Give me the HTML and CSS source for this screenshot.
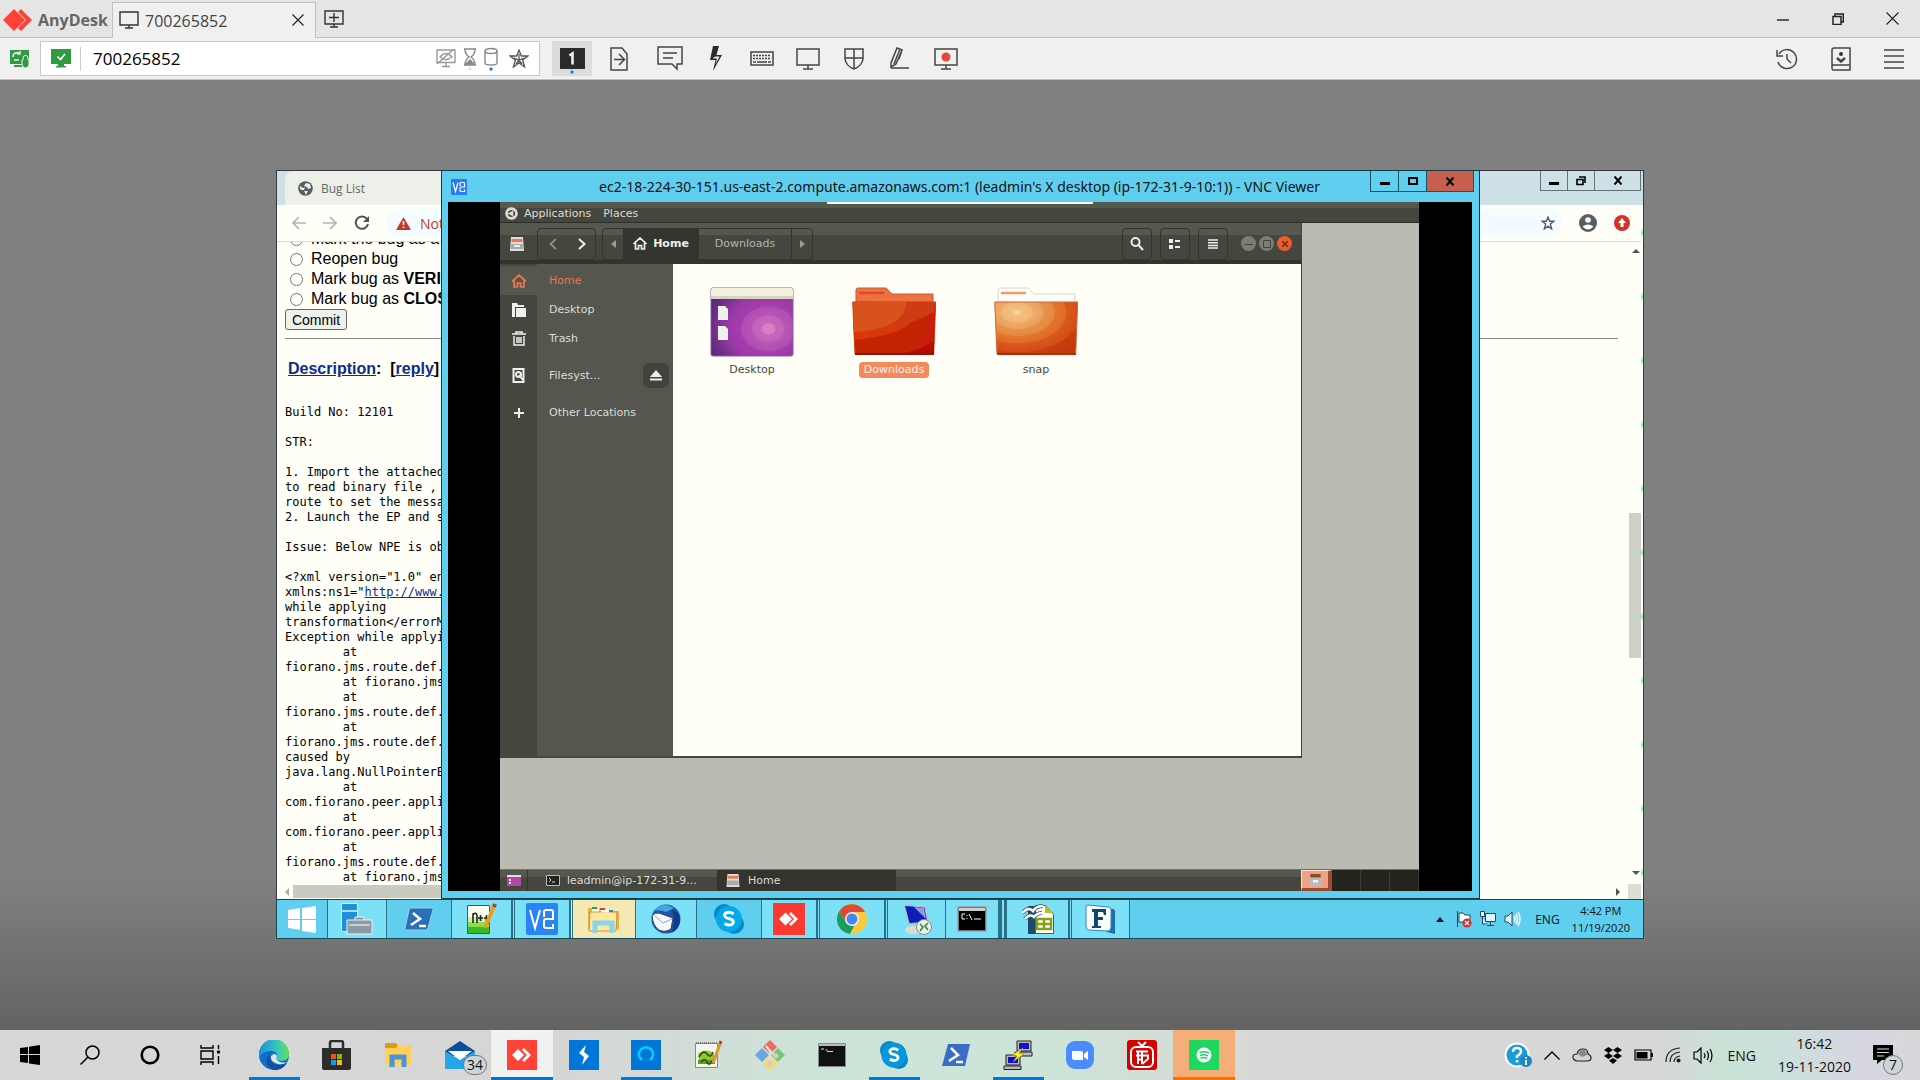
FILE: index.html
```
<!DOCTYPE html>
<html lang="en">
<head>
<meta charset="utf-8">
<title>AnyDesk - 700265852</title>
<link rel="stylesheet" href="styles.css">
</head>
<body>
<header class="titlebar">
  <div class="brand">
    <svg width="30" height="22" viewBox="0 0 30 22"><path fill="#ff4235" d="M0 11 11 0 22 11 11 22zM15 3l3-3 11 11-11 11-3-3 8-8z"/></svg>
    <span>AnyDesk</span>
  </div>
  <div class="session-tab">
    <svg width="20" height="18" viewBox="0 0 20 18" fill="none" stroke="#333" stroke-width="1.4"><path d="M1 1h18v13H1zM10 14v3M6 17h8"/></svg>
    <span>700265852</span>
    <button class="plain" aria-label="Close tab"><svg width="12" height="12" viewBox="0 0 12 12" stroke="#222" stroke-width="1.1"><path d="M.5.5l11 11M11.5.5l-11 11"/></svg></button>
  </div>
  <button class="plain new-tab" aria-label="New tab"><svg width="20" height="18" viewBox="0 0 20 18" fill="none" stroke="#333" stroke-width="1.4"><path d="M1 1h18v13H1zM10 14v3M6 17h8M10 3v9M5 7.500h10"/></svg></button>
  <div class="window-controls">
    <button class="plain" aria-label="Minimize"><svg width="12" height="12" viewBox="0 0 12 12" stroke="#222" stroke-width="1.4"><path d="M0 7h12"/></svg></button>
    <button class="plain" aria-label="Restore"><svg width="12" height="12" viewBox="0 0 12 12" fill="none" stroke="#222" stroke-width="1.5"><path d="M1 3.500h8v8H1zM3 3V1h8.300v8H9.500"/></svg></button>
    <button class="plain" aria-label="Close"><svg width="13" height="13" viewBox="0 0 13 13" stroke="#222" stroke-width="1.1"><path d="M.5.5l12 12M12.500.5l-12 12"/></svg></button>
  </div>
</header>

<nav class="toolbar">
  <svg class="link-state" width="20" height="20" viewBox="0 0 20 20"><path fill="#2f9a3f" d="M0 1h19v14H0zM4 16h8v2H4z"/><path d="M3 8a4 4 0 0 1 7-3M10 2v3H7M9 11H4" fill="none" stroke="#eee" stroke-width="1.500"/><path fill="#2f9a3f" stroke="#eee" d="M13 11V9a2.500 2.500 0 0 1 5 0v2h1v5q-1 3-3.500 3T12 16v-5z"/></svg>
  <div class="address">
    <svg width="20" height="19" viewBox="0 0 20 19"><path fill="#2f9a3f" d="M0 0h20v15H0zM7 15h6v2h2v1.500H5V17h2z"/><path fill="none" stroke="#fff" stroke-width="1.600" d="M6.500 7.500l3 3L14 5"/></svg>
    <i class="divider"></i>
    <input type="text" value="700265852" aria-label="Remote address">
    <svg width="20" height="19" viewBox="0 0 20 19" fill="none" stroke="#999" stroke-width="1.400"><path d="M1 1h18v12.500H1zM10 14v3M6 17.500h8M1 15L18 0M4 8q6-7 12 0-6 5-12 0z"/></svg>
    <svg width="14" height="24" viewBox="0 0 14 24" fill="none" stroke="#888" stroke-width="1.400"><path d="M1 2h12M1 18h12M2 2q0 5 4 8-4 3-4 8M12 2q0 5-4 8 4 3 4 8"/><path fill="#888" d="M3 17l4-4 4 4z"/><circle cx="7" cy="22" r="1.500" fill="#d0dff2" stroke="none"/></svg>
    <svg width="14" height="24" viewBox="0 0 14 24" fill="none" stroke="#888" stroke-width="1.400"><ellipse cx="7" cy="4" rx="6" ry="2.500"/><path d="M1 4v12q0 2 6 2t6-2V4"/><circle cx="7" cy="22" r="1.700" fill="#2d7be0" stroke="none"/></svg>
    <svg class="star" width="20" height="20" viewBox="0 0 20 20" fill="none" stroke="#555" stroke-width="1.300"><path d="M10 1l2.300 6h6.500l-5.200 4 2 7L10 14l-5.600 4 2-7-5.200-4h6.500zM10 5v9M5 9l5 2 5-2M7 15l3-4 3 4"/></svg>
  </div>
  <button class="plain tool active" aria-label="Monitor 1"><svg width="25" height="27" viewBox="0 0 25 27"><path fill="#2b2b2b" d="M0 0h25v21H0z"/><path fill="none" stroke="#eee" stroke-width="2.600" d="M9.500 7.500l3-2v11"/><circle cx="12" cy="24" r="1.700" fill="#2d7be0"/></svg></button>
  <button class="plain tool" aria-label="Transfer file"><svg width="18" height="24" viewBox="0 0 18 24" class="line"><path d="M1 1h11l5 6v16H1zM4 12.500h10M9 7l5.500 5.500L9 18"/></svg></button>
  <button class="plain tool chat" aria-label="Chat"><svg width="26" height="25" viewBox="0 0 26 25" class="line"><path d="M1 1h24v17h-5v5l-5-5H1zM6 7h14M6 12h10"/></svg></button>
  <button class="plain tool" aria-label="Actions"><svg width="14" height="25" viewBox="0 0 14 25"><path fill="#2b2b2b" d="M4 0h6L7.500 9H13L4 25l2.500-11H1z"/><path fill="#f0f0f0" d="M6.500 10.500h4l-4 8 1.500-6H3.500z"/></svg></button>
  <button class="plain tool" aria-label="Keyboard"><svg width="24" height="15" viewBox="0 0 24 15" class="line"><path d="M1 1h22v13H1z"/><path d="M3 4.500h18M3 7.500h18" stroke-dasharray="2 1"/><path d="M3 11h3m1 0h10m1 0h3"/></svg></button>
  <button class="plain tool" aria-label="Display"><svg width="24" height="22" viewBox="0 0 24 22" class="line"><path d="M1 1h22v16H1zM12 17v4M7 21h10"/></svg></button>
  <button class="plain tool" aria-label="Permissions"><svg width="20" height="22" viewBox="0 0 20 22" class="line"><path d="M1 1h18v10q-1 7-9 10Q2 18 1 11zM10 1v20M1 10h18"/></svg></button>
  <button class="plain tool" aria-label="Whiteboard"><svg width="20" height="23" viewBox="0 0 20 23" class="line"><path d="M1 21h18M1 20V16L7 1l5 2-6 14zM10 2L4 17M12 3l-3 9"/></svg></button>
  <button class="plain tool" aria-label="Record"><svg width="24" height="22" viewBox="0 0 24 22" class="line"><path d="M1 1h22v16H1zM12 17v4M7 21h10"/><circle cx="12" cy="9" r="4.500" fill="#e8453c" stroke="none"/></svg></button>
  <div class="tool-right">
    <button class="plain" aria-label="History"><svg width="22" height="22" viewBox="0 0 22 22" class="line"><path d="M3 6a9.500 9.500 0 1 1-1 8M1 2v6h6M11 6v5l4 4"/></svg></button>
    <button class="plain" aria-label="Address book"><svg width="20" height="24" viewBox="0 0 20 24" class="line"><path d="M3 1h16v22H2q-1 0-1-2V3q0-2 2-2zM1 18h18"/><path d="M6 11l4 3.500L14 11" stroke-width="2.500"/><circle cx="10" cy="7" r="2" fill="#333" stroke="none"/></svg></button>
    <button class="plain" aria-label="Menu"><svg width="20" height="22" viewBox="0 0 20 22" class="line"><path d="M0 2h20M0 8h20M0 14h20M0 20h20"/></svg></button>
  </div>
</nav>

<main class="viewer">
<div class="remote">
  <div class="desktop">
    <section class="chrome">
      <div class="tabstrip">
        <div class="chrome-tab">
          <svg width="15" height="15" viewBox="0 0 15 15"><circle cx="7.500" cy="7.500" r="7.300" fill="#555f63"/><path fill="#edf0e8" d="M2 5l3 2 2-1-1 3-2 0-2-1zM8 2l4 1 1 4-3 1-1-2-3-1zM6 10l4 0-2 4z"/></svg>
          <span>Bug List</span>
        </div>
        <div class="chrome-controls">
          <button class="plain" aria-label="Minimize window"><svg width="10" height="10"><path d="M0 6h10v3H0z"/></svg></button>
          <button class="plain" aria-label="Restore window"><svg width="10" height="10" fill="none" stroke="#000" stroke-width="1.600"><path d="M1 3.500h6v5H1zM3 1h6v6"/></svg></button>
          <button class="plain" aria-label="Close window"><svg width="8" height="9" stroke="#000" stroke-width="2"><path d="M.5.500l7 8M7.500.500l-7 8"/></svg></button>
        </div>
      </div>
      <div class="navbar">
        <svg width="14" height="14" fill="none" stroke="#a9b6b7" stroke-width="1.700"><path d="M14 7H1M7 1L1 7l6 6"/></svg>
        <svg width="14" height="14" fill="none" stroke="#a9b6b7" stroke-width="1.700"><path d="M0 7h13M7 1l6 6-6 6"/></svg>
        <svg width="16" height="16" viewBox="0 0 16 16" fill="none" stroke="#4d5558" stroke-width="2"><path d="M13 4a6.200 6.200 0 1 0 1 5"/><path fill="#4d5558" stroke="none" d="M15 1v6H9z"/></svg>
        <div class="omnibox">
          <svg width="15" height="13" viewBox="0 0 15 13"><path fill="#c9352c" d="M7.500 0L15 13H0z"/><path stroke="#fff" stroke-width="1.600" d="M7.500 4v4M7.500 9.500v1.500"/></svg>
          <span>Not secure</span>
          <svg class="end" width="14" height="14" viewBox="0 0 20 20" fill="none" stroke="#555f63" stroke-width="2"><path d="M10 1.500l2.300 6h6l-5 4 2 7L10 14.500l-5.300 4 2-7-5-4h6z"/></svg>
        </div>
        <svg width="18" height="18" viewBox="0 0 18 18"><circle cx="9" cy="9" r="9" fill="#555f63"/><circle cx="9" cy="6" r="2.800" fill="#fff"/><path fill="#fff" d="M3.500 12.500q5.500-4 11 0-5.500 6-11 0z"/></svg>
        <svg width="16" height="16" viewBox="0 0 16 16"><circle cx="8" cy="8" r="8" fill="#d93025"/><path fill="#fff" d="M8 3l4 5H9.500v4h-3V8H4z"/></svg>
      </div>
      <div class="page">
        <form class="bug-form">
          <label><input type="radio" name="knob">Mark the bug as a duplicate</label>
          <label><input type="radio" name="knob">Reopen bug</label>
          <label><input type="radio" name="knob"><span>Mark bug as <b>VERIFIED</b></span></label>
          <label><input type="radio" name="knob"><span>Mark bug as <b>CLOSED</b></span></label>
          <button type="button">Commit</button>
        </form>
        <hr>
        <p class="heading"><a href="#c0">Description</a>: &nbsp;[<a href="#reply">reply</a>]</p>
        <pre>Build No: 12101

STR:

1. Import the attached
to read binary file ,
route to set the message
2. Launch the EP and s

Issue: Below NPE is ob

&lt;?xml version="1.0" en
xmlns:ns1="<a href="#ns">http://www.</a>
while applying
transformation&lt;/errorM
Exception while applyi
        at
fiorano.jms.route.def.
        at fiorano.jms
        at
fiorano.jms.route.def.
        at
fiorano.jms.route.def.
caused by
java.lang.NullPointerE
        at
com.fiorano.peer.appli
        at
com.fiorano.peer.appli
        at
fiorano.jms.route.def.
        at fiorano.jms</pre>
        <div class="vscroll"><i class="up"></i><i class="thumb"></i><i class="down"></i></div>
      </div>
      <div class="hscroll"><i class="left"></i><i class="thumb"></i><i class="right"></i><i class="corner"></i></div>
      <i class="edge"></i>
    </section>

    <section class="vnc">
      <div class="vnc-title">
        <svg width="16" height="16" viewBox="0 0 16 16"><rect width="16" height="16" rx="1" fill="#2a7df0"/><path fill="none" stroke="#fff" stroke-width="1.200" d="M2 3.500l2.500 9L7 3.500M9 7V4.500q0-1 1-1h2.500q1 0 1 1V8H10q-1 0-1 1v2.500q0 1 1 1h3.500v-2"/></svg>
        <h1>ec2-18-224-30-151.us-east-2.compute.amazonaws.com:1 (leadmin's X desktop (ip-172-31-9-10:1)) - VNC Viewer</h1>
        <div class="vnc-controls">
          <button class="plain" aria-label="Minimize VNC"><svg width="10" height="10"><path d="M0 6h10v3H0z"/></svg></button>
          <button class="plain" aria-label="Maximize VNC"><svg width="10" height="9" fill="none" stroke="#000" stroke-width="2"><path d="M1 1h8v6H1z"/></svg></button>
          <button class="plain close" aria-label="Close VNC"><svg width="8" height="9" stroke="#000" stroke-width="2"><path d="M.5.500l7 8M7.500.500l-7 8"/></svg></button>
        </div>
      </div>
      <div class="vnc-screen">
        <div class="gnome">
          <div class="panel top">
            <svg width="13" height="13" viewBox="0 0 13 13"><circle cx="6.500" cy="6.500" r="6.300" fill="#dcdcd4"/><circle cx="6.500" cy="6.500" r="2.800" fill="none" stroke="#45463e" stroke-width="1.600"/><path stroke="#dcdcd4" stroke-width="1.200" d="M6.500 6.500H1M6.500 6.500l3-5M6.500 6.500l3 5"/></svg>
            <span>Applications</span><span>Places</span>
            <i class="vnc-handle"></i>
          </div>
          <div class="workspace">
            <section class="files">
              <div class="files-head">
                <svg class="cabinet" width="14" height="14" viewBox="0 0 14 14"><path fill="#ddd" d="M1 0h12l1 14H0z"/><path fill="#ef7748" d="M1.500 2h11v3h-11z"/><path fill="#aaa" d="M1 7h12v5H1z"/><path fill="#eee" d="M4 8h6v2H4z"/></svg>
                <div class="group nav-pair">
                  <button class="plain" aria-label="Back"><svg width="8" height="12" fill="none" stroke="#8f9088" stroke-width="1.800"><path d="M7 1L1.500 6 7 11"/></svg></button>
                  <button class="plain" aria-label="Forward"><svg width="8" height="12" fill="none" stroke="#eee" stroke-width="2"><path d="M1 1l5.500 5L1 11"/></svg></button>
                </div>
                <div class="group path">
                  <button class="plain arrow" aria-label="Scroll path left"><svg width="5" height="8"><path fill="#9a9b93" d="M5 0v8L0 4z"/></svg></button>
                  <button class="plain current"><svg width="14" height="13" viewBox="0 0 14 13" fill="none" stroke="#eee" stroke-width="1.700"><path d="M.500 7L7 1l6.500 6M2.500 6v6h3V8.500h3V12h3V6"/></svg>Home</button>
                  <button class="plain crumb">Downloads</button>
                  <button class="plain arrow" aria-label="Scroll path right"><svg width="5" height="8"><path fill="#9a9b93" d="M0 0v8l5-4z"/></svg></button>
                </div>
                <div class="head-tools">
                  <button class="plain group" aria-label="Search"><svg width="14" height="14" fill="none" stroke="#eee" stroke-width="2"><circle cx="5.500" cy="5" r="4"/><path d="M8.500 8l4.500 5"/></svg></button>
                  <button class="plain group" aria-label="View"><svg width="12" height="10"><path fill="#eee" d="M0 0h4v4H0zM6 1h5v2H6zM0 6h4v4H0zM6 7h5v2H6z"/></svg></button>
                  <button class="plain group" aria-label="Menu"><svg width="10" height="10" stroke="#eee" stroke-width="1.500"><path d="M0 1h10M0 3.700h10M0 6.400h10M0 9h10"/></svg></button>
                </div>
                <div class="bullets">
                  <button class="plain bullet" aria-label="Minimize files"><svg width="8" height="8" stroke="#45463e"><path d="M0 4.500h8"/></svg></button>
                  <button class="plain bullet" aria-label="Maximize files"><svg width="8" height="8" stroke="#45463e" fill="none"><path d="M.500.500h7v7h-7z"/></svg></button>
                  <button class="plain bullet quit" aria-label="Close files"><svg width="6" height="6" stroke="#5a2a15" stroke-width="1.400"><path d="M0 0l6 6M6 0L0 6"/></svg></button>
                </div>
              </div>
              <div class="files-body">
                <ul class="places">
                  <li class="here"><svg width="16" height="14" viewBox="0 0 14 13" fill="none" stroke="#e8764a" stroke-width="1.700"><path d="M.500 7L7 1l6.500 6M2.500 6v6h3V8.500h3V12h3V6"/></svg><span>Home</span></li>
                  <li><svg width="16" height="14"><path fill="#eee" d="M1 0h5l1 2h6v2H4v10H1zM5 5h10v9H5z"/></svg><span>Desktop</span></li>
                  <li><svg width="14" height="15" fill="none" stroke="#eee" stroke-width="1.500"><path d="M0 3h14M4 3V1h6v2M2 5v9h10V5M5 6v6M7 6v6M9 6v6"/></svg><span>Trash</span></li>
                  <li class="spaced"><svg width="14" height="15" fill="none" stroke="#eee" stroke-width="2"><path d="M1.500 1h10v13h-10z"/><circle cx="6.500" cy="6.500" r="2.500"/><path d="M7 7l4 5"/></svg><span>Filesyst...</span>
                    <button class="plain eject" aria-label="Eject"><svg width="12" height="11"><path fill="#eee" d="M6 0l6 7H0zM0 8.500h12v2H0z"/></svg></button></li>
                  <li class="spaced"><svg width="10" height="10" stroke="#eee" stroke-width="2"><path d="M0 5h10M5 0v10"/></svg><span>Other Locations</span></li>
                </ul>
                <div class="grid">
                  <figure>
                    <svg width="84" height="70" viewBox="0 0 84 70"><defs><radialGradient id="pu" cx=".7" cy=".6" r=".75"><stop offset="0" stop-color="#dc84c4"/><stop offset=".1" stop-color="#d680c2"/><stop offset=".12" stop-color="#c766bd"/><stop offset=".25" stop-color="#c263bb"/><stop offset=".28" stop-color="#b655b1"/><stop offset=".42" stop-color="#b04fb4"/><stop offset=".46" stop-color="#a63bae"/><stop offset=".65" stop-color="#9a3aa8"/><stop offset="1" stop-color="#5c2a7c"/></radialGradient></defs><rect x="1" y="1" width="82" height="68" rx="2" fill="url(#pu)" stroke="#8c5a9c"/><path fill="#f3f0e2" d="M1 3q0-2 2-2h78q2 0 2 2v9H1z"/><path fill="#d9d3bf" d="M1 9h82v3H1z"/><path fill="#eef0ea" d="M8 19h7l3 3v11H8zM8 39h7l3 3v11H8z"/></svg>
                    <figcaption>Desktop</figcaption>
                  </figure>
                  <figure class="selected">
                    <svg width="84" height="70" viewBox="0 0 84 70"><path fill="#ee7140" stroke="#c85a34" d="M4 15V3q0-2 2-2h28l6 6h41v9z"/><path stroke="#e04a22" stroke-width="2.500" d="M7 6h25"/><path fill="#c42304" stroke="#c43a14" d="M.700 15h83l-2 52H3z"/><path fill="#d8380c" d="M1 15h68q-4 22-26 30-18 6-41 8z"/><path fill="#d8521c" d="M1 15h54q-2 16-20 24-14 5-33 6z"/><path fill="#ce3c14" d="M55 15h28l-1 10q-22 12-40 14 11-8 13-24z"/><path fill="#cc1c10" d="M83 27l-1 30q-10-2-20 2 12-16 21-32z"/><path fill="#b40c02" d="M82 54v13H46q18-2 36-13z"/><path stroke="#8c1505" stroke-width="2" d="M3 67h79"/></svg>
                    <figcaption>Downloads</figcaption>
                  </figure>
                  <figure>
                    <svg width="84" height="70" viewBox="0 0 84 70"><defs><radialGradient id="or" cx=".27" cy=".2" r=".95"><stop offset="0" stop-color="#fbd79a"/><stop offset=".05" stop-color="#f9cc90"/><stop offset=".06" stop-color="#f3c07e"/><stop offset=".2" stop-color="#f0b674"/><stop offset=".21" stop-color="#eeaa68"/><stop offset=".33" stop-color="#ec9f5e"/><stop offset=".34" stop-color="#e6914c"/><stop offset=".47" stop-color="#e48a3c"/><stop offset=".48" stop-color="#e27630"/><stop offset=".62" stop-color="#e06a26"/><stop offset=".63" stop-color="#d95a1c"/><stop offset=".8" stop-color="#d44c18"/><stop offset=".81" stop-color="#c8400e"/><stop offset="1" stop-color="#c23a0c"/></radialGradient></defs><path fill="#fdfdf8" stroke="#d5dacd" d="M4 15V3q0-2 2-2h28l6 6h41v9z"/><path stroke="#f09a70" stroke-width="2.500" d="M7 6h25"/><path fill="url(#or)" stroke="#d0663a" d="M.700 15h83l-2 52H3z"/><path stroke="#a83408" stroke-width="2" d="M3 67h79"/></svg>
                    <figcaption>snap</figcaption>
                  </figure>
                </div>
              </div>
            </section>
          </div>
          <div class="panel bottom">
            <div class="show"><svg width="14" height="11"><path fill="#b048a8" d="M0 0h14v11H0z"/><path fill="#e8d8e0" d="M0 0h14v2H0zM2 4h2v2H2zM2 7h2v2H2z"/></svg></div>
            <div class="task term"><svg width="14" height="11"><path fill="#22251e" stroke="#bbb" d="M.500.500h13v10H.500z"/><path stroke="#ddd" fill="none" d="M3 3l2 2-2 2M6 7h3"/></svg><span>leadmin@ip-172-31-9...</span></div>
            <div class="task open"><svg width="14" height="13" viewBox="0 0 14 14"><path fill="#ddd" d="M1 0h12l1 14H0z"/><path fill="#ef7748" d="M1.500 2h11v3h-11z"/><path fill="#aaa" d="M1 7h12v5H1z"/></svg><span>Home</span></div>
            <div class="pager"><i class="cell on"><svg width="13" height="12" viewBox="0 0 14 14"><path fill="#bbb" d="M0 4h14v10H0z"/><path fill="#8c4a24" d="M1 0h12v4H1z"/><path fill="#eee" d="M4 7h6v3H4z"/></svg></i><i class="cell"></i><i class="cell"></i><i class="cell"></i></div>
          </div>
        </div>
      </div>
    </section>
  </div>

  <footer class="w8bar">
    <button class="plain w1" aria-label="Start"><svg width="28" height="27" viewBox="0 0 28 27"><path fill="#fff" d="M0 4l12-2v11H0zM14 2l14-2v13H14zM0 14h12v10L0 22zM14 14h14v13l-14-2z"/></svg></button>
    <button class="plain w2 lit" aria-label="Server Manager"><svg width="32" height="32"><path fill="#2090dc" stroke="#d8f2fb" d="M.500.500h16v28H.500z"/><path stroke="#d8f2fb" stroke-width="1.500" d="M1 8h15"/><path fill="#8d9aa4" stroke="#e8f2f4" d="M6 17h25v14H6zM14 17v-3h9v3"/><path stroke="#fff" d="M8 22h21"/></svg></button>
    <button class="plain w3" aria-label="PowerShell"><svg width="30" height="24"><path fill="#2b6fb4" stroke="#9fd0f0" d="M7 1h21q2 0 1 2l-5 18q0 2-2 2H2q-2 0-1-2L5 3q0-2 2-2z"/><path fill="none" stroke="#fff" stroke-width="2.500" d="M9 6l7 6-9 6M15 19h7"/></svg></button>
    <button class="plain w4 lit" aria-label="Notepad++"><svg width="32" height="32"><path fill="#fbfff4" stroke="#555" d="M1.500 2.500h22v28h-22z"/><path fill="#d4f0a0" d="M2 14h21v5H2z"/><path fill="#8cdc50" d="M2 19h21v5H2z"/><path fill="#3cb824" d="M2 24h21v6H2z"/><path fill="none" stroke="#222" stroke-width="1.600" d="M7 20v-9q4-2 4 2v7M12 15h5M14.500 12v6M18 15h5M20.500 12v6"/><path stroke="#e6a022" stroke-width="4" d="M19 25L28 3"/><path stroke="#b04030" stroke-width="4" d="M28 4l1-3"/></svg></button>
    <button class="plain w5 lit stack" aria-label="VNC"><svg width="32" height="32" viewBox="0 0 16 16"><rect width="16" height="16" rx="1" fill="#2a84f5"/><path fill="none" stroke="#fff" d="M2 3.500l2.500 9L7 3.500M9 7V4.500q0-1 1-1h2.500q1 0 1 1V8H10q-1 0-1 1v2.500q0 1 1 1h3.500v-2"/></svg></button>
    <button class="plain w6 hot stack" aria-label="Explorer"><svg width="34" height="30"><path fill="#e3b04b" d="M1 4h11l2 3h18v18H1z"/><path fill="#fbe9a0" stroke="#c9973a" d="M3 8h27l-1 19H2z"/><path stroke="#fff" stroke-width="3" d="M5 6h7M14 7h8"/><path stroke="#27a048" stroke-width="2" d="M5 4h5"/><path stroke="#d8402a" stroke-width="2" d="M13 5h5"/><path stroke="#2e86d8" stroke-width="2" d="M22 7h4"/><path fill="none" stroke="#8cd4ee" stroke-width="5" d="M8 29V19h17v10"/></svg></button>
    <button class="plain w7 lit" aria-label="Thunderbird"><svg width="32" height="32"><circle cx="16" cy="16" r="14.500" fill="#1d58a8"/><path fill="#47a4e4" d="M4 8Q12-2 24 5l-8 4q-7-3-12-1z"/><path fill="#0f3c8a" d="M22 6q9 4 8 12-1 9-9 12 5-8 1-24z"/><path fill="#f4f8fb" stroke="#2d3f70" d="M2 13q3-4 7-3l14 5-2 11q-6 4-12 1-6-4-7-14z"/><path fill="none" stroke="#96a8bc" d="M5 13l8 7 9-4"/></svg></button>
    <button class="plain w8" aria-label="Skype"><svg width="30" height="30" viewBox="0 0 30 30"><circle cx="10" cy="10" r="10" fill="#0587c8"/><circle cx="20" cy="20" r="10" fill="#0587c8"/><circle cx="15" cy="15" r="13" fill="#05a8ea"/><path fill="none" stroke="#fff" stroke-width="3" d="M19.500 10q-3-2.500-6.500-1.500-3.500 1.500-2 4 1 1.500 4.500 2.200 5 1.300 3.500 4.500-2 3.500-8.500.5"/></svg></button>
    <button class="plain w9 lit" aria-label="AnyDesk"><svg width="32" height="32"><path fill="#fa3a31" d="M0 0h32v32H0z"/><path fill="#fff" d="M6 16l6.500-6.500L19 16l-6.500 6.500zM16 11l2-2 7 7-7 7-2-2 5-5z"/></svg></button>
    <button class="plain w10 lit stack" aria-label="Chrome"><svg width="30" height="30" viewBox="0 0 30 30"><circle cx="15" cy="15" r="15" fill="#fbc93c"/><path fill="#dc4a3c" d="M2 7.500A15 15 0 0 1 28 8H15l-6 10z"/><path fill="#16a05c" d="M2 7.500L9.500 19l7.500 3-4 8A15 15 0 0 1 2 7.500z"/><circle cx="15" cy="15" r="7" fill="#f3f3ee"/><circle cx="15" cy="15" r="5.500" fill="#4687f2"/></svg></button>
    <button class="plain w11 lit stack" aria-label="Remote Desktop"><svg width="32" height="32"><ellipse cx="13" cy="27" rx="9" ry="4" fill="#dcdcd4"/><path fill="#0a1fb8" stroke="#b8c0cc" stroke-width="1.500" d="M3 2l21 2 3 15-19 2z"/><path fill="#8d98e8" d="M13 4l10 1 2 11z"/><circle cx="23" cy="24" r="7.500" fill="#eef0ea" stroke="#888"/><path fill="none" stroke="#2b8a3c" stroke-width="1.600" d="M19 21l3 3-3 4M27 20l-3 3 3 4"/></svg></button>
    <button class="plain w12 lit" aria-label="Command Prompt"><svg width="30" height="26"><path fill="#000" stroke="#9aa0a4" stroke-width="1.500" d="M1 1h28v24H1z"/><path fill="#ccd0cc" d="M2 2h26v3H2z"/><path fill="none" stroke="#fff" d="M8 8H5v5h3M10 9v1M10 12v1M12 8l3 6M17 13h7"/></svg></button>
    <button class="plain w13 lit stack3" aria-label="OpenOffice"><svg width="32" height="32"><path fill="#1c4a6e" d="M6 3h7v28H6z"/><path fill="#fffff4" stroke="#555" d="M13.500 2.500h10l8 9v19h-18z"/><path fill="#b8c41c" d="M23 2v8h8z"/><path fill="#fff" stroke="#8aa01c" stroke-width="2.500" d="M15 16h14v10H15zM22 16v10M15 21h14"/><path fill="none" stroke="#34505e" stroke-width="4" d="M0 10q7-7 11-2 3-5 10-5M3 16q5-6 9-2 3-4 8-4"/><path fill="none" stroke="#f4faff" stroke-width="2.500" d="M0 10q7-7 11-2 3-5 10-5M3 16q5-6 9-2 3-4 8-4"/></svg></button>
    <button class="plain w14 lit stack" aria-label="Fiorano"><svg width="31" height="30"><path fill="#1d6fb4" d="M8 4l20 1q2 0 2 3v22l-8-2z"/><path fill="#fafcf8" stroke="#3a88c4" d="M3 1l20 2q3 0 3 3v17q0 4-3 4L4 26q-3 0-3-4V3q0-2 2-2z"/><path fill="#0e4676" d="M7 5h14v6h-2l-1-3h-5v5h5v3h-5v6h3v2H7v-2h2V8H7z"/></svg></button>
    <div class="w8tray">
      <svg width="8" height="5"><path fill="#112" d="M4 0l4 5H0z"/></svg>
      <svg width="16" height="17"><path fill="#fff" stroke="#245" d="M1.500 0v16M3 2h4l2 2h5v7H3z"/><circle cx="11" cy="12" r="4.500" fill="#d02b2b"/><path stroke="#fff" stroke-width="1.300" d="M9 10l4 4M13 10l-4 4"/></svg>
      <svg width="16" height="16" fill="#dff4fc" stroke="#234a5c"><path d="M5.500 2.500h10v8h-10zM7 14.500h7M10.500 11v3M.500.500h4v5h-4zM2.500 6v7h4"/></svg>
      <svg width="18" height="16" fill="none" stroke="#fff" stroke-width="1.500"><path fill="#dff4fc" stroke="#234a5c" stroke-width="1" d="M1 5h3l4-4v14l-4-4H1z"/><path d="M10 5q2 3 0 6M12 3q3 5 0 10M14 1q4 7 0 14"/></svg>
      <span>ENG</span>
      <time>4:42 PM<br>11/19/2020</time>
    </div>
  </footer>
</div>
</main>

<footer class="hostbar">
  <button class="plain t0" aria-label="Start"><svg width="20" height="20"><path d="M0 3l8-1v7H0zM9 1.700L20 0v9H9zM0 10h8v8l-8-1zM9 10h11v10L9 18.500z"/></svg></button>
  <button class="plain t0" aria-label="Search"><svg width="20" height="20" fill="none" stroke="#000" stroke-width="1.500"><circle cx="12.500" cy="7.500" r="6.500"/><path d="M8 12l-7.500 7.500"/></svg></button>
  <button class="plain t0" aria-label="Cortana"><svg width="20" height="20" fill="none" stroke="#000" stroke-width="2.600"><circle cx="10" cy="10" r="8.300"/></svg></button>
  <button class="plain t0" aria-label="Task view"><svg width="21" height="20" fill="none" stroke="#000" stroke-width="1.400"><path d="M1 0v3h12V0M1 6h12v8H1zM1 20v-3h12v3M18.500 0v4M18.500 11v8"/><circle cx="18.500" cy="7" r="1" fill="#000"/></svg></button>
  <button class="plain t run first" aria-label="Edge"><svg width="30" height="30" viewBox="0 0 30 30"><defs><linearGradient id="ed" x1="0" x2="1"><stop offset="0" stop-color="#1b90dc"/><stop offset=".6" stop-color="#36c6c0"/><stop offset="1" stop-color="#69df55"/></linearGradient></defs><circle cx="15" cy="15" r="15" fill="#0f6fc8"/><path fill="url(#ed)" d="M0 14A15 15 0 0 1 30 14q0 7-8 7-6 0-4-4 1-5-5-6Q5 10 0 17z"/><path fill="#144f9c" d="M11 14q-2 5 3 9t14 0Q23 31 14 30 6 26 8 18z"/><path fill="#dbe6ee" d="M12 16q4-4 6 0-2 4 3 6 3 1 7 0-4 3-9 2-8-2-7-8z"/></svg></button>
  <button class="plain t" aria-label="Store"><svg width="29" height="30"><path fill="#2c2c2c" d="M0 8h29v20q0 2-2 2H2q-2 0-2-2z"/><path fill="none" stroke="#2c2c2c" stroke-width="2.500" d="M8 8V3q0-2 2-2h9q2 0 2 2v5"/><path fill="#f25022" d="M9 14h5v5H9z"/><path fill="#7fba00" d="M15 14h5v5h-5z"/><path fill="#00a4ef" d="M9 20h5v5H9z"/><path fill="#ffb900" d="M15 20h5v5h-5z"/></svg></button>
  <button class="plain t" aria-label="File Explorer"><svg width="27" height="24"><path fill="#e09a10" d="M0 1q0-1 1-1h10l2 3-1 3H0z"/><path fill="#ffd05c" d="M0 5h11l2-3h13v20H0z"/><path fill="none" stroke="#4a94d4" stroke-width="5" d="M7 24V14h12v10"/></svg></button>
  <button class="plain t badge-host" aria-label="Mail"><svg width="30" height="28"><path fill="#0a4ea2" d="M0 10L15 0l15 10v5H0z"/><path fill="#28a4ea" d="M0 10l15 9 15-9v18H0z"/><path fill="#fff" d="M3 10h24l-12 9z"/></svg><span class="badge">34</span></button>
  <button class="plain t run focus" aria-label="AnyDesk"><svg width="30" height="30"><path fill="#ff4235" d="M0 0h30v30H0z"/><path fill="#fff" d="M5 15l6-6 6 6-6 6zM15 10l2-2 7 7-7 7-2-2 5-5z"/></svg></button>
  <button class="plain t" aria-label="Share"><svg width="30" height="30"><path fill="#0077d8" d="M0 0h30v30H0z"/><path fill="#fff" d="M17 5l-7 8 5 4-2 8 7-9-5-4z"/></svg></button>
  <button class="plain t run" aria-label="Alexa"><svg width="30" height="30"><path fill="#0077d8" d="M0 0h30v30H0z"/><path fill="none" stroke="#00d0ff" stroke-width="2.500" d="M11 20a7 7 0 1 1 8 0"/></svg></button>
  <button class="plain t" aria-label="Notepad++"><svg width="29" height="30"><path fill="#f4f4ec" stroke="#888" d="M1.500 3.500h22v24h-22z"/><path fill="none" stroke="#777" stroke-width="2" stroke-dasharray="1 1" d="M2 3h22"/><path fill="#8fc82c" d="M4 14q6-6 14-2l3 4-2 8H6z"/><path fill="#58a018" d="M4 20h17v4H4z"/><path fill="none" stroke="#2c4a14" stroke-width="1.500" d="M5 17q4-8 8-3t6-2M7 22q4-5 6 0t5-1"/><path stroke="#e0952a" stroke-width="3" d="M19 23l7-19"/><path stroke="#b04030" stroke-width="3" d="M26 4l1-3"/></svg></button>
  <button class="plain t" aria-label="Git"><svg width="30" height="30"><path fill="#ec6a5e" d="M15 0l7 7-7 7-7-7z"/><path fill="#6aa5e4" d="M7 8l7 7-7 7-7-7z"/><path fill="#7cc46c" d="M23 8l7 7-7 7-7-7z"/><path fill="#fbd95c" d="M15 16l7 7-7 7-7-7z"/><path fill="none" stroke="#ddd" stroke-width="2.500" d="M11 6l4 5v12M15 11l6 5"/><circle cx="15" cy="23" r="2.500" fill="#ccc"/><circle cx="21" cy="16" r="2.500" fill="#ccc"/></svg></button>
  <button class="plain t" aria-label="Command Prompt"><svg width="28" height="24"><path fill="#111" stroke="#888" d="M.500.500h27v23H.500z"/><path fill="#bbb" d="M1 1h26v2H1z"/><path stroke="#ddd" d="M3 6h3M8 6l2 3M10 8.500h5"/></svg></button>
  <button class="plain t run" aria-label="Skype"><svg width="28" height="28" viewBox="0 0 30 30"><circle cx="10" cy="10" r="10" fill="#0587c8"/><circle cx="20" cy="20" r="10" fill="#0587c8"/><circle cx="15" cy="15" r="13.500" fill="#0596dc"/><path fill="none" stroke="#fff" stroke-width="3" d="M19.500 10q-3-2.500-6.500-1.500-3.500 1.500-2 4 1 1.500 4.500 2.200 5 1.300 3.500 4.500-2 3.500-8.500.5"/></svg></button>
  <button class="plain t" aria-label="PowerShell"><svg width="28" height="22"><path fill="#3a6cc8" d="M6 0h22l-5 22H0z"/><path fill="none" stroke="#fff" stroke-width="2.500" d="M9 4l7 7-9 6M14 18h7"/></svg></button>
  <button class="plain t run" aria-label="PuTTY"><svg width="30" height="30"><path fill="#bbb" stroke="#222" d="M14 1h14v10H14zM12 12h17v4H12zM3 15h14v10H3zM1 26h17v3.500H1z"/><path fill="#1010c8" d="M16 3h10v6H16zM5 17h10v6H5z"/><path fill="#ffee20" stroke="#886" stroke-width=".6" d="M20 8L9 15l5 1-4 6 11-8-5-1z"/></svg></button>
  <button class="plain t" aria-label="Zoom"><svg width="28" height="28"><rect width="28" height="28" rx="9" fill="#4a8cff"/><path fill="#fff" d="M6 10h9q2 0 2 2v7H8q-2 0-2-2zM18 13l4-3v9l-4-3z"/></svg></button>
  <button class="plain t" aria-label="TV"><svg width="30" height="30"><rect width="30" height="30" rx="3" fill="#d60000"/><rect x="4" y="7" width="22" height="20" rx="5" fill="none" stroke="#fff" stroke-width="2"/><path fill="none" stroke="#fff" stroke-width="2" d="M11 2l4 4 4-4M9 11.500h12M9 15.500h12v4M11 11v13M15 12v12M11 19.500h4M21 19l-6 5"/></svg></button>
  <button class="plain t alert" aria-label="Spotify"><svg width="30" height="30"><path fill="#1ed760" d="M0 0h30v30H0z"/><circle cx="15" cy="15" r="7.500" fill="#fff"/><path fill="none" stroke="#1ed760" stroke-width="1.500" d="M10.500 12.500q5-1.500 9.500.5M11 15.500q4-1.500 8 .5M11.500 18q4-1 6.500.5"/></svg></button>
  <div class="tray">
    <svg width="28" height="26" viewBox="0 0 28 26"><circle cx="13" cy="13" r="12.500" fill="#fff"/><circle cx="13" cy="13" r="10.500" fill="#1a9cdc"/><path fill="none" stroke="#fff" stroke-width="2.500" d="M9 10q0-4 4-4t4 3.500q0 2-4 4.500v2M13 18v2.500"/><circle cx="22" cy="19" r="6" fill="#1688cc"/><path stroke="#fff" stroke-width="2" d="M22 15v1.500M22 18v5"/></svg>
    <svg width="16" height="9" fill="none" stroke="#000" stroke-width="1.300"><path d="M.500 8.500L8 1l7.500 7.500"/></svg>
    <svg width="20" height="14"><path fill="#d4d4d4" stroke="#222" stroke-width="1.200" d="M5 13q-4-1-4-4t4-3q1-5 6-5t5 5q3 1 3 4t-4 3z"/><path fill="#888" d="M6 6q1-4 5-4t4 5l-5 2z"/></svg>
    <svg width="18" height="17"><path d="M4.500 0L9 3 4.500 6 0 3zM13.500 0L18 3l-4.500 3L9 3zM4.500 6L9 9l-4.500 3L0 9zM13.500 6L18 9l-4.500 3L9 9zM9 11l4 2.500L9 17l-4-3.500z"/></svg>
    <svg width="19" height="12"><path fill="none" stroke="#000" stroke-width="1.200" d="M1 1h16v10H1z"/><path d="M2.500 3h11v6.500h-11zM17 4h2v4h-2z"/></svg>
    <svg width="16" height="16" fill="none" stroke="#222" stroke-width="1.200"><path d="M1 15Q1 2 15 1M5 15q0-9 10-10M9 15q0-5 6-6"/><circle cx="13.500" cy="13.500" r="1.500" fill="#000"/></svg>
    <svg width="21" height="17" fill="none" stroke="#000" stroke-width="1.200"><path d="M1 5h3l4-4v15l-4-4H1zM11 6q2 2.500 0 5M14 4q3 4.500 0 9M17 2q4 6.500 0 13"/></svg>
    <span class="lang">ENG</span>
    <time>16:42<br>19-11-2020</time>
    <div class="badge-host note"><svg width="20" height="20"><path d="M0 0h20v15H9l-5 4v-4H0z"/><path stroke="#ddd" stroke-width="1.200" d="M4 4h12M4 7.500h12M4 11h7"/></svg><span class="badge">7</span></div>
  </div>
</footer>
</body>
</html>
```
FILE: styles.css
```
* { box-sizing: border-box; }
body {
  margin: 0;
  min-height: 100vh;
  display: flex;
  flex-direction: column;
  font-family: "Open Sans", "Noto Sans", sans-serif;
  background: #808080;
  color: #111;
}
svg { display: block; flex: none; }
.plain {
  display: flex;
  align-items: center;
  justify-content: center;
  padding: 0;
  border: 0;
  background: none;
  color: inherit;
  font: inherit;
  flex: none;
}
.line { fill: none; stroke: #444; stroke-width: 1.5; }

/* Host title bar */
.titlebar {
  height: 38px;
  display: flex;
  background: #e5e5e5;
  border-bottom: 1px solid #c0c0c0;
}
.brand {
  width: 112px;
  display: flex;
  align-items: center;
  gap: 5px;
  padding: 2px 0 0 3px;
  color: #666;
  font: bold 16px/20px "Open Sans", sans-serif;
}
.session-tab {
  width: 204px;
  height: 36px;
  margin-top: 2px;
  padding: 0 11px 0 6px;
  display: flex;
  align-items: center;
  gap: 6px;
  background: #f0f0f0;
  border: 1px solid #c0c0c0;
  border-bottom: 0;
  font-size: 16px;
  color: #444;
}
.session-tab svg { margin-top: -2px; }
.session-tab button { margin-left: auto; }
.new-tab { width: 36px; }
.window-controls { display: flex; margin-left: auto; }
.window-controls button { width: 55px; }

/* Host toolbar */
.toolbar {
  height: 42px;
  display: flex;
  align-items: center;
  background: #f0f0f0;
  border-bottom: 1px solid #c0c0c0;
}
.link-state { margin: 0 10px; }
.address {
  width: 500px;
  height: 35px;
  margin-right: 12px;
  padding: 0 10px;
  display: flex;
  align-items: center;
  gap: 7px;
  background: #fff;
  border: 1px solid #c8c8c8;
}
.address .divider { width: 1px; height: 24px; margin-left: 2px; background: #ccc; }
.address input {
  flex: 1;
  min-width: 0;
  padding: 0 5px;
  border: 0;
  background: none;
  font: 17px/24px "Open Sans", sans-serif;
  color: #000;
}
.address .star { margin-left: 4px; }
.tool { width: 46px; height: 35px; }
.tool.active { width: 40px; margin-right: 4px; background: #dcdcdc; padding-top: 6px; }
.tool.chat { margin-left: 5px; }
.tool-right { display: flex; gap: 33px; margin-left: auto; padding-right: 16px; }

/* Remote session */
.viewer {
  flex: 1;
  display: flex;
  padding: 90px 276px 91px;
  background: linear-gradient(#808080 0, #808080 84%, #636363 100%);
}
.remote { flex: 1; min-width: 0; display: flex; flex-direction: column; }
.desktop { position: relative; flex: 1; min-height: 600px; overflow: hidden; }

.chrome {
  position: absolute;
  inset: 0;
  display: flex;
  flex-direction: column;
  overflow: hidden;
  background: #fffff8;
  border: 1px solid #333a40;
  border-bottom: 0;
}
.tabstrip { height: 34px; display: flex; justify-content: space-between; background: #cce0e6; flex: none; }
.chrome-tab {
  width: 240px;
  margin-left: 8px;
  padding-left: 13px;
  display: flex;
  align-items: center;
  gap: 8px;
  border-radius: 8px 8px 0 0;
  background: #edf0e8;
  color: #666;
  font-size: 12px;
}
.chrome-controls { display: flex; margin-right: 2px; height: 20px; border: 1px solid #66747a; border-top: 0; }
.chrome-controls button { width: 27px; border-right: 1px solid #66747a; }
.chrome-controls button:last-child { width: 45px; border-right: 0; }
.navbar {
  height: 37px;
  flex: none;
  display: flex;
  align-items: center;
  gap: 17px;
  padding: 0 13px 0 15px;
  border-bottom: 1px solid #d8d6ec;
}
.omnibox {
  flex: 1;
  height: 28px;
  margin-left: -2px;
  padding: 0 7px 0 11px;
  display: flex;
  align-items: center;
  gap: 9px;
  border-radius: 14px;
  background: #f4fcff;
  color: #c03a30;
  font-size: 14px;
}
.omnibox .end { margin-left: auto; }
.page { position: relative; flex: 1; min-height: 0; overflow: hidden; padding: 0 25px 0 8px; color: #000; }
.bug-form { margin-top: -13px; font: 16px/20px "Liberation Sans", Arial, sans-serif; }
.bug-form label { display: flex; align-items: center; height: 20px; }
.bug-form input { width: 13px; height: 13px; margin: 0 8px 0 5px; }
.bug-form button {
  display: block;
  width: 62px;
  height: 21px;
  padding: 0;
  border: 1px solid #666;
  border-radius: 3px;
  background: #eff1ec;
  font: 14px/18px "Liberation Sans", Arial, sans-serif;
  color: #000;
}
.page hr { height: 1px; margin: 8px 0 0; border: 0; background: #888; }
.page a { color: #0b2c90; }
.heading { margin: 20px 3px 26px; font: bold 16px/20px "Liberation Sans", Arial, sans-serif; }
.page pre { margin: 0; font: 12px/15px "DejaVu Sans Mono", monospace; }
.vscroll { position: absolute; top: 0; right: 0; bottom: 0; width: 15px; display: flex; flex-direction: column; align-items: center; }
.up, .down, .left, .right { width: 0; height: 0; border: 4px solid transparent; flex: none; }
.up { border-bottom-color: #555; margin-top: 3px; }
.down { border-top-color: #555; margin: auto 0 5px; }
.left { border-right-color: #aaa; margin-left: 4px; }
.right { border-left-color: #555; margin: 0 4px 0 auto; }
.vscroll .thumb { width: 13px; height: 145px; margin-top: 260px; background: #ccd0c6; }
.hscroll { height: 15px; flex: none; display: flex; align-items: center; }
.hscroll .thumb { width: 900px; height: 13px; margin-left: 4px; background: #c8ccc0; }
.hscroll .corner { width: 15px; height: 15px; background: #dcded6; }
.edge {
  position: absolute;
  top: 58px;
  right: 0;
  bottom: 0;
  width: 2px;
  background: repeating-linear-gradient(#ff0 0 2px, #6ff 2px 6px, #fffff8 6px 64px);
}

/* VNC viewer window */
.vnc {
  position: absolute;
  inset: 0 164px 0 165px;
  display: flex;
  flex-direction: column;
  padding: 0 7px 7px 6px;
  background: #60ceee;
  border: 1px solid #0e3a44;
}
.vnc-title { height: 31px; display: flex; align-items: center; flex: none; padding-left: 3px; }
.vnc-title h1 { flex: 1; margin: 0; padding-left: 82px; text-align: center; font: 14px/20px "Noto Sans", sans-serif; white-space: nowrap; }
.vnc-controls { display: flex; align-self: flex-start; height: 21px; border: 1px solid #1d5060; border-top: 0; margin-right: -2px; }
.vnc-controls button { width: 28px; border-right: 1px solid #1d5060; }
.vnc-controls .close { width: 46px; border-right: 0; background: #c75f50; }
.vnc-screen { flex: 1; display: flex; min-height: 0; padding: 0 53px 0 52px; background: #000; }
.gnome { flex: 1; min-width: 0; display: flex; flex-direction: column; background: #babcb3; color: #dcdcd4; font: 12px/16px "DejaVu Sans", sans-serif; }
.panel { display: flex; flex: none; align-items: center; }
.panel.top {
  position: relative;
  height: 21px;
  gap: 12px;
  padding: 3px 0 0 5px;
  background: linear-gradient(#55584c 0 6px, #45463e 6px);
  border-bottom: 1px solid #2c2e27;
  font-size: 11px;
}
.panel.top svg { margin-right: -6px; }
.vnc-handle { position: absolute; top: 0; left: 327px; width: 266px; height: 2px; background: #fff; }
.workspace { position: relative; flex: 1; }
.files {
  position: absolute;
  top: 0;
  left: 0;
  width: 802px;
  height: 535px;
  display: flex;
  flex-direction: column;
  border-right: 1px solid #45463e;
  border-bottom: 2px solid #45463e;
  background: #fffff8;
  font-size: 11px;
}
.files-head {
  height: 41px;
  flex: none;
  display: flex;
  align-items: center;
  padding: 4px 9px 0 10px;
  background: linear-gradient(#55584c 0 12px, #45463e 12px);
  border-bottom: 4px solid #33342d;
}
.group { height: 32px; border: 1px solid #33352e; border-radius: 4px; }
.cabinet { margin-right: 13px; }
.nav-pair { display: flex; width: 59px; }
.nav-pair button { width: 29px; }
.path { display: flex; margin-left: 6px; width: 211px; }
.path .arrow { width: 20px; }
.path .current { width: 76px; gap: 6px; background: #33352e; color: #eeeee6; font-weight: bold; }
.path .crumb { width: 93px; color: #b4b5ad; border-right: 1px solid #33352e; }
.head-tools { display: flex; gap: 8px; margin-left: auto; }
.head-tools button { width: 30px; }
.bullets { display: flex; gap: 3px; margin-left: 13px; }
.bullet { width: 15px; height: 15px; border-radius: 50%; background: #7c7d75; }
.bullet.quit { background: #ee5a2a; }
.files-body { flex: 1; display: flex; min-height: 0; }
.places {
  width: 173px;
  margin: 0;
  padding: 2px 0 0;
  list-style: none;
  background: linear-gradient(90deg, #45463e 0 37px, #55564d 37px);
}
.places li {
  height: 29px;
  display: grid;
  grid-template-columns: 37px 1fr auto;
  align-items: center;
}
.places li > svg { justify-self: center; }
.places li > span { padding-left: 12px; }
.places .spaced { margin-top: 8px; }
.places .here { color: #e8764a; background: linear-gradient(90deg, #55564d 37px, transparent 37px); }
.eject { width: 26px; height: 25px; margin-right: 4px; border-radius: 6px; background: #42433b; }
.grid { display: grid; grid-template-columns: repeat(3, 142px); align-content: start; padding: 23px 8px; color: #45463e; }
.grid figure { margin: 0; display: flex; flex-direction: column; align-items: center; gap: 5px; }
.grid figcaption { padding: 0 5px; border-radius: 4px; }
.selected figcaption { background: #f4895c; color: #fff4ec; }
.panel.bottom {
  height: 22px;
  align-items: stretch;
  background: linear-gradient(#55584c 0 7px, #45463e 7px);
  border-top: 1px solid #70736a;
  font-size: 11px;
}
.show { width: 28px; display: flex; align-items: center; justify-content: center; border-right: 1px solid #33352e; }
.task { display: flex; align-items: center; gap: 8px; white-space: nowrap; }
.task.term { width: 189px; padding-left: 18px; gap: 7px; }
.task.open { width: 179px; padding-left: 9px; background: #33342d; }
.pager { display: flex; margin-left: auto; }
.cell { width: 29px; background: #22241d; border-right: 1px solid #3a3c34; }
.cell.on { width: 31px; display: flex; align-items: center; justify-content: center; background: #f0a084; border: 1px solid #ffe0d4; border-right: 4px solid #9c4a30; border-bottom: 3px solid #9c4a30; }

/* Remote taskbar */
.w8bar {
  height: 40px;
  flex: none;
  display: flex;
  background: #60ceee;
  border: 1px solid #164a5a;
}
.w8bar button { border-right: 1px solid #2c7088; }
.w8bar .lit { background: #7ce0f6; }
.w8bar .hot { background: #f4e8b4; }
.w8bar .stack { border-left: 3px double #2c7088; }
.w8bar .stack3 { border-left: 8px double #2c7088; }
.w1 { width: 51px; }
.w2 { width: 59px; }
.w3 { width: 65px; }
.w4 { width: 60px; }
.w5 { width: 58px; }
.w6 { width: 66px; }
.w7 { width: 61px; }
.w8 { width: 65px; }
.w9 { width: 55px; }
.w10 { width: 68px; }
.w11 { width: 61px; }
.w12 { width: 53px; }
.w13 { width: 70px; }
.w14 { width: 61px; }
.w8tray { display: flex; align-items: center; gap: 8px; margin-left: auto; padding-right: 13px; font-size: 12px; }
.w8tray svg:first-child { margin-right: 4px; }
.w8tray span { margin-left: 5px; }
.w8tray time { margin-left: 4px; text-align: center; line-height: 17px; font-size: 11px; }

/* Host taskbar */
.hostbar {
  height: 50px;
  flex: none;
  display: flex;
  background: linear-gradient(90deg, #d8d7d8 0, #d6d6d5 30%, #cde4d8 42%, #cde4d8 55%, #d8d8d6 66%, #d8d6d6 86%, #c8e3d6 90%, #cbe0dc 93%, #d6d6e2 97%, #d8d8da 100%);
}
.t0 { width: 60px; }
.t { width: 62px; border-top: 3px solid transparent; border-bottom: 3px solid transparent; }
.first { margin-left: 3px; }
.run { background: linear-gradient(#0078d7, #0078d7) center bottom / 51px 3px no-repeat border-box; }
.run.focus { background: linear-gradient(#0078d7, #0078d7) center bottom / 62px 3px no-repeat border-box, #eff2f0 border-box; }
.alert { background: #f6ae78; border-bottom-color: #ff7000; border-top-color: #f6ae78; }
.badge-host { position: relative; }
.badge {
  position: absolute;
  right: 4px;
  bottom: 2px;
  width: 24px;
  height: 20px;
  border: 1px solid #777;
  border-radius: 10px;
  background: #ccd5d8;
  font-size: 14px;
  line-height: 18px;
  text-align: center;
}
.tray { display: flex; align-items: center; gap: 12px; margin-left: auto; padding-right: 27px; }
.tray .lang { margin-left: 1px; font-size: 14px; }
.tray time { margin: 0 10px; text-align: center; font-size: 14px; line-height: 23px; }
.note .badge { right: -10px; bottom: -10px; width: 20px; }
```
